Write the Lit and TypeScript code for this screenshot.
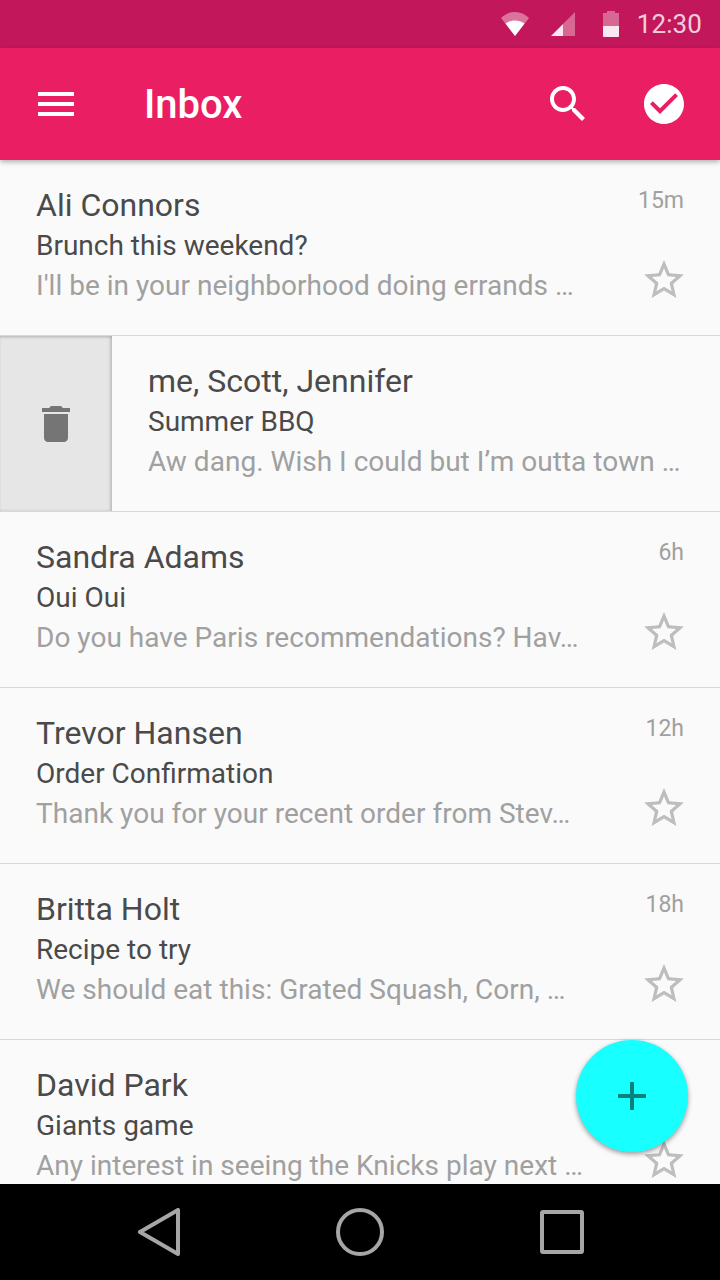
import { css, html, LitElement } from 'lit';
import { customElement } from 'lit/decorators.js';

type Mail = { name: string; subject: string; preview: string; time: string; swiped?: boolean };

const mails: Mail[] = [
  { name: 'Ali Connors', subject: 'Brunch this weekend?', preview: "I'll be in your neighborhood doing errands …", time: '15m' },
  { name: 'me, Scott, Jennifer', subject: 'Summer BBQ', preview: 'Aw dang. Wish I could but I’m outta town …', time: '', swiped: true },
  { name: 'Sandra Adams', subject: 'Oui Oui', preview: 'Do you have Paris recommendations? Hav…', time: '6h' },
  { name: 'Trevor Hansen', subject: 'Order Confirmation', preview: 'Thank you for your recent order from Stev…', time: '12h' },
  { name: 'Britta Holt', subject: 'Recipe to try', preview: 'We should eat this: Grated Squash, Corn, …', time: '18h' },
  { name: 'David Park', subject: 'Giants game', preview: 'Any interest in seeing the Knicks play next …', time: '' },
];

const icon = (d: string) => html`<svg class="icon" viewBox="0 0 24 24"><path d=${d}></path></svg>`;

const MENU = 'M3 18h18v-2H3v2zm0-5h18v-2H3v2zm0-7v2h18V6H3z';
const SEARCH = 'M15.5 14h-.79l-.28-.27C15.41 12.59 16 11.11 16 9.5 16 5.91 13.09 3 9.5 3S3 5.91 3 9.5 5.91 16 9.5 16c1.61 0 3.09-.59 4.23-1.57l.27.28v.79l5 4.99L20.49 19l-4.99-5zm-6 0C7.01 14 5 11.99 5 9.5S7.01 5 9.5 5 14 7.01 14 9.5 11.99 14 9.5 14z';
const CHECK = 'M12 2C6.48 2 2 6.48 2 12s4.48 10 10 10 10-4.48 10-10S17.52 2 12 2zm-2 15l-5-5 1.41-1.41L10 14.17l7.59-7.59L19 8l-9 9z';
const STAR = 'M22 9.24l-7.19-.62L12 2 9.19 8.63 2 9.24l5.46 4.73L5.82 21 12 17.27 18.18 21l-1.63-7.03L22 9.24zM12 15.4l-3.76 2.27 1-4.28-3.32-2.88 4.38-.38L12 6.1l1.71 4.04 4.38.38-3.32 2.88 1 4.28L12 15.4z';
const TRASH = 'M6 19c0 1.1.9 2 2 2h8c1.1 0 2-.9 2-2V7H6v12zM19 4h-3.5l-1-1h-5l-1 1H5v2h14V4z';
const ADD = 'M19 13h-6v6h-2v-6H5v-2h6V5h2v6h6v2z';

@customElement('app-root')
export class AppRoot extends LitElement {
  static styles = css`
    :host {
      display: flex;
      flex-direction: column;
      position: relative;
      width: 720px;
      height: 1280px;
      overflow: hidden;
      background: #fafafa;
      font-family: Roboto, sans-serif;
    }
    .icon {
      display: block;
      width: 48px;
      height: 48px;
      fill: currentColor;
    }
    .status {
      flex: none;
      height: 48px;
      display: flex;
      align-items: center;
      justify-content: flex-end;
      padding-right: 18px;
      background: #c2185b;
      color: #fff;
      box-sizing: border-box;
    }
    .status svg {
      display: block;
      fill: #fff;
    }
    .wifi { width: 28px; height: 24px; margin-right: 22px; }
    .signal { width: 24px; height: 24px; margin-right: 28px; }
    .battery { width: 16px; height: 26px; margin-right: 18px; }
    .clock {
      font-size: 26px;
      line-height: 48px;
      letter-spacing: 0.1px;
      color: rgba(255, 255, 255, 0.8);
    }
    .bar {
      flex: none;
      position: relative;
      z-index: 1;
      height: 112px;
      display: flex;
      align-items: center;
      padding: 0 32px;
      background: #e91e63;
      color: #fff;
      box-shadow: 0 2px 5px rgba(0, 0, 0, 0.3);
    }
    .title {
      flex: 1;
      margin-left: 64px;
      font-size: 40px;
      font-weight: 500;
    }
    .search { margin-right: 48px; }
    .list {
      flex: 1;
      min-height: 0;
      overflow: hidden;
    }
    .row {
      height: 176px;
      box-sizing: border-box;
      display: flex;
      border-bottom: 1px solid #d9d9d9;
    }
    .swipe {
      flex: none;
      width: 112px;
      display: flex;
      align-items: center;
      justify-content: center;
      background: #e6e6e6;
      color: #757575;
      box-shadow: inset -2px 0 3px rgba(0, 0, 0, 0.16), inset 0 2px 2px rgba(0, 0, 0, 0.1);
    }
    .text {
      flex: 1;
      min-width: 0;
      padding: 25px 0 0 36px;
      white-space: nowrap;
      overflow: hidden;
    }
    .name {
      font-size: 32px;
      line-height: 40px;
      color: #4a4a4a;
    }
    .subject {
      margin-top: 1px;
      font-size: 28px;
      line-height: 40px;
      color: #4a4a4a;
    }
    .preview {
      font-size: 28px;
      line-height: 40px;
      letter-spacing: 0.02px;
      color: #a0a0a0;
    }
    .side {
      flex: none;
      width: 80px;
      padding: 21px 32px 0 0;
      display: flex;
      flex-direction: column;
      align-items: flex-end;
    }
    .time {
      height: 40px;
      padding-right: 4px;
      font-size: 23px;
      line-height: 40px;
      color: #a0a0a0;
    }
    .star {
      margin-top: 35px;
      color: #bdbdbd;
    }
    .fab {
      position: absolute;
      left: 576px;
      top: 1040px;
      width: 112px;
      height: 112px;
      border-radius: 50%;
      display: flex;
      align-items: center;
      justify-content: center;
      background: #18ffff;
      color: rgba(0, 0, 0, 0.5);
      box-shadow: 0 2px 5px rgba(0, 0, 0, 0.4);
    }
    .nav {
      flex: none;
      position: relative;
      z-index: 1;
      height: 96px;
      display: flex;
      align-items: center;
      justify-content: space-between;
      padding: 0 134px;
      background: #000;
    }
    .nav svg {
      display: block;
      width: 48px;
      height: 48px;
      fill: none;
      stroke: #a6a6a6;
      stroke-width: 4;
      stroke-linejoin: round;
    }
  `;

  renderRow(m: Mail) {
    return html`
      <div class="row">
        ${m.swiped ? html`<div class="swipe">${icon(TRASH)}</div>` : ''}
        <div class="text">
          <div class="name">${m.name}</div>
          <div class="subject">${m.subject}</div>
          <div class="preview">${m.preview}</div>
        </div>
        ${m.swiped
          ? ''
          : html`
              <div class="side">
                <div class="time">${m.time}</div>
                <div class="star">${icon(STAR)}</div>
              </div>
            `}
      </div>
    `;
  }

  render() {
    return html`
      <div class="status">
        <svg class="wifi" viewBox="0 0 28 24">
          <path opacity="0.4" d="M14 24L0 6C8 -2 20 -2 28 6z"></path>
          <path d="M14 24L4.500 11.500C10 7.500 18 7.500 23.500 11.500z"></path>
        </svg>
        <svg class="signal" viewBox="0 0 24 24">
          <path opacity="0.35" d="M24 0V24H12V12z"></path>
          <path opacity="0.9" d="M0 24L12 12V24z"></path>
        </svg>
        <svg class="battery" viewBox="0 0 16 26">
          <path opacity="0.35" d="M4 0H12V2H16V15H0V2H4z"></path>
          <path opacity="0.9" d="M0 15H16V25C16 25.600 15.600 26 15 26H1C0.400 26 0 25.600 0 25z"></path>
        </svg>
        <div class="clock">12:30</div>
      </div>
      <div class="bar">
        ${icon(MENU)}
        <div class="title">Inbox</div>
        <div class="search">${icon(SEARCH)}</div>
        ${icon(CHECK)}
      </div>
      <div class="list">${mails.map((m) => this.renderRow(m))}</div>
      <div class="nav">
        <svg viewBox="0 0 48 48"><path d="M6 24L44 2V46z"></path></svg>
        <svg viewBox="0 0 48 48"><circle cx="24" cy="24" r="22"></circle></svg>
        <svg viewBox="0 0 48 48"><rect x="4" y="4" width="40" height="40" rx="1"></rect></svg>
      </div>
      <div class="fab">${icon(ADD)}</div>
    `;
  }
}
